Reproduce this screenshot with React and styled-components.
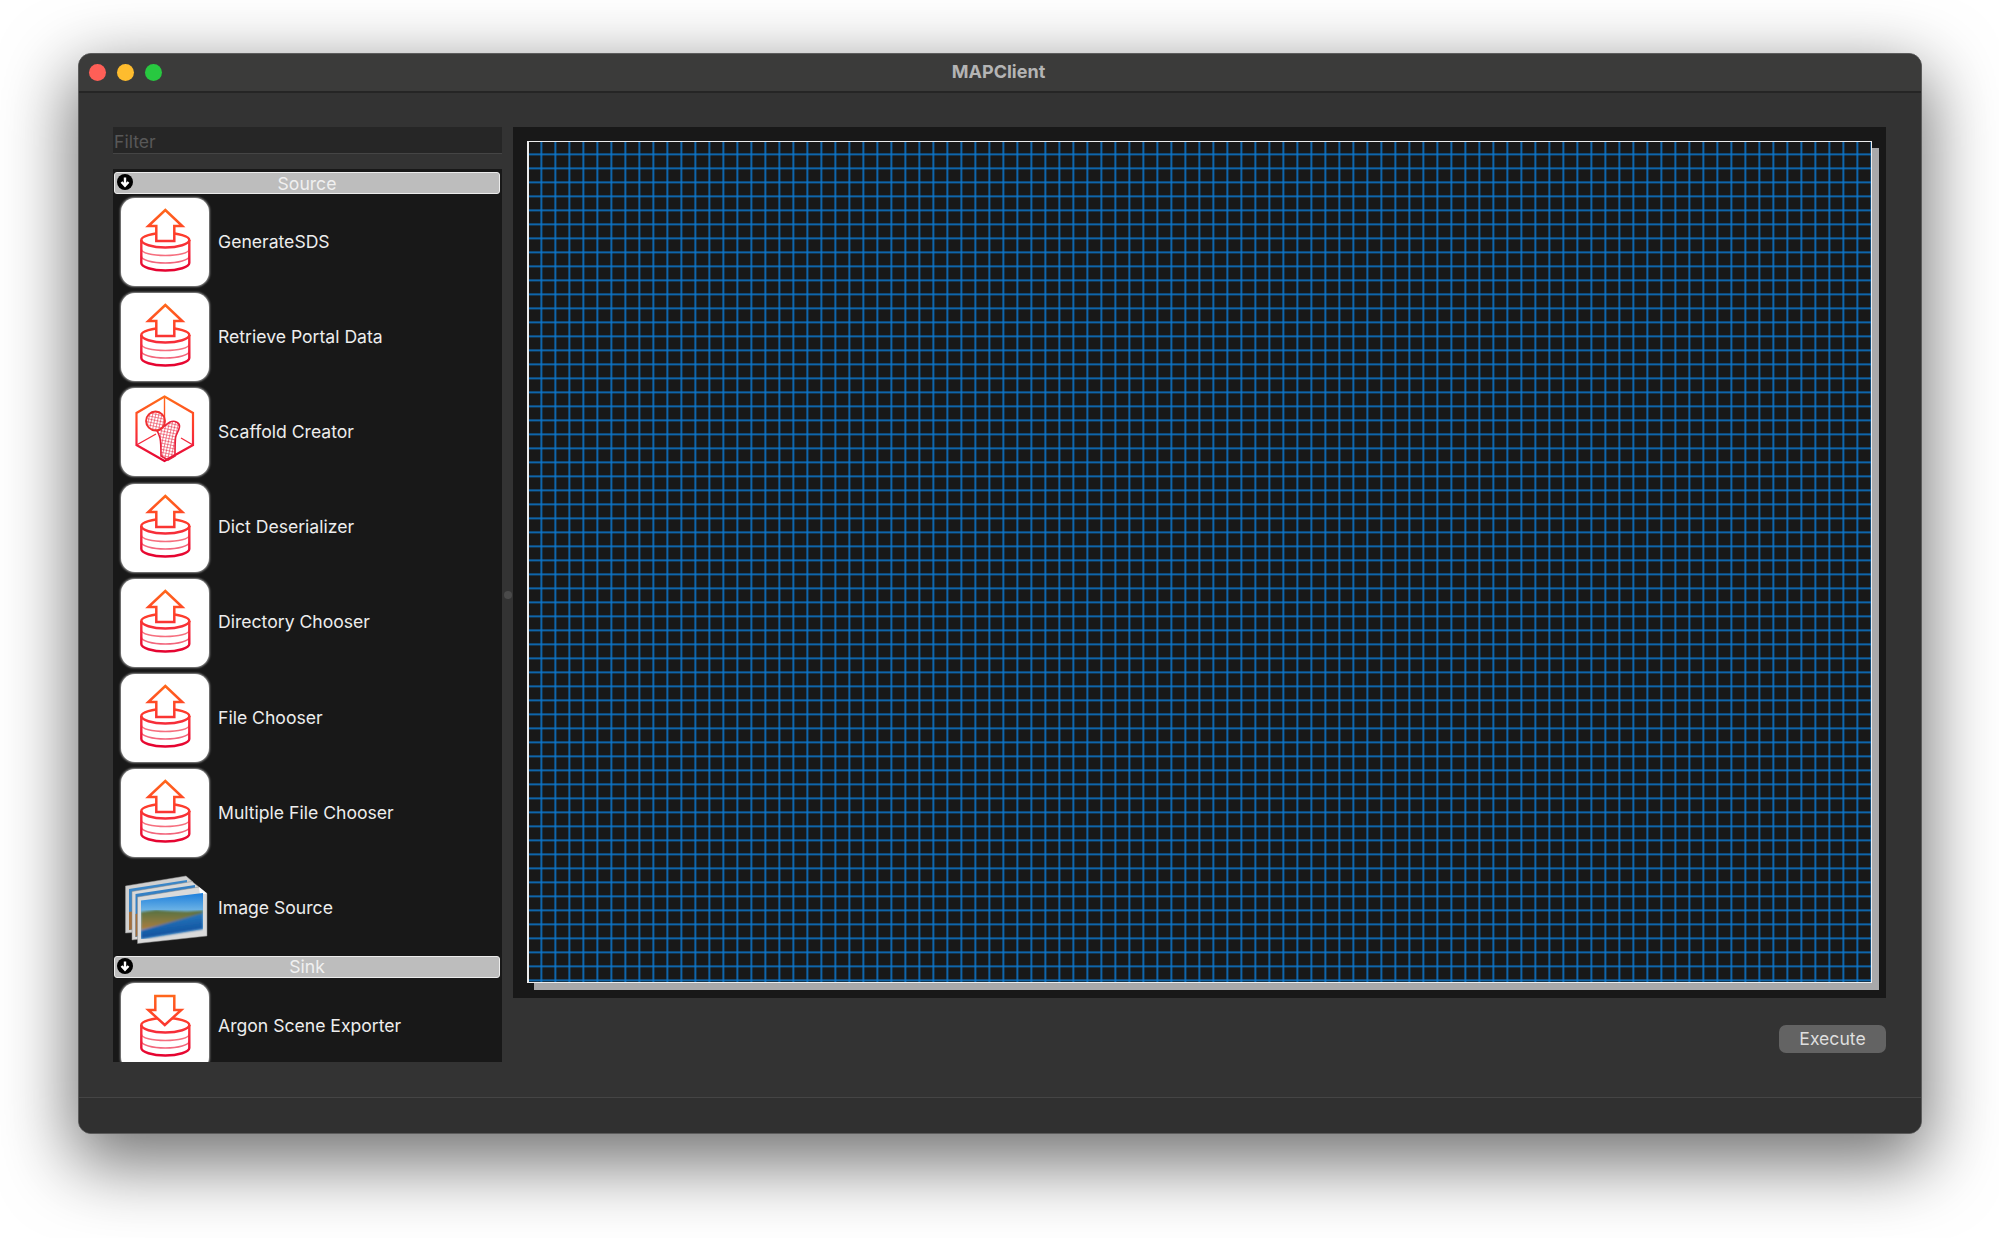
import styled, { createGlobalStyle } from 'styled-components'

const GlobalStyle = createGlobalStyle`
    html, body {
        margin: 0;
        height: 100%;
        background: #ffffff;
        overflow: hidden;
        font-family: Inter, "Liberation Sans", Arial, sans-serif;
    }
`

const sourceSteps = [
    { name: 'GenerateSDS', icon: 'upload' },
    { name: 'Retrieve Portal Data', icon: 'upload' },
    { name: 'Scaffold Creator', icon: 'scaffold' },
    { name: 'Dict Deserializer', icon: 'upload' },
    { name: 'Directory Chooser', icon: 'upload' },
    { name: 'File Chooser', icon: 'upload' },
    { name: 'Multiple File Chooser', icon: 'upload' },
    { name: 'Image Source', icon: 'image' },
]

const sinkSteps = [{ name: 'Argon Scene Exporter', icon: 'download' }]

const RedGradient = ({ id }) => (
    <defs>
        <linearGradient id={id} gradientUnits="userSpaceOnUse" x1="0" y1="10" x2="0" y2="74">
            <stop offset="0" stopColor="#ff6a1a" />
            <stop offset="0.4" stopColor="#ff3f2a" />
            <stop offset="0.65" stopColor="#f42a3c" />
            <stop offset="1" stopColor="#e4002f" />
        </linearGradient>
    </defs>
)

const Database = ({ stroke }) => (
    <g fill="none" stroke={stroke}>
        <ellipse cx="45" cy="42" rx="24" ry="7" strokeWidth="2.400" />
        <path d="M21 42V65C21 69 32 72.500 45 72.500S69 69 69 65V42" strokeWidth="2.400" fill="#fff" />
        <path d="M21 42C21 46 32 49.500 45 49.500S69 46 69 42" strokeWidth="2.400" />
        <path d="M21 51C21 55 32 57.500 45 57.500S69 55 69 51" strokeWidth="1.500" opacity=".65" />
        <path d="M21 58C21 62 32 65 45 65S69 62 69 58" strokeWidth="1.500" opacity=".65" />
    </g>
)

const TransferIcon = ({ id, down }) => {
    const stroke = `url(#${id})`
    return (
        <svg width="88" height="88" viewBox="0.7 0 88 88">
            <RedGradient id={id} />
            <Database stroke={stroke} />
            {down ? (
                <path
                    d="M35 13H54V27H61L44.500 42L28 27H35Z"
                    fill="#fff"
                    stroke={stroke}
                    strokeWidth="2.500"
                />
            ) : (
                <path
                    d="M45 12L62 28H54V43H36V28H28Z"
                    fill="#fff"
                    stroke={stroke}
                    strokeWidth="2.500"
                />
            )}
        </svg>
    )
}

const ScaffoldIcon = ({ id }) => {
    const stroke = `url(#${id})`
    return (
        <svg width="88" height="88" viewBox="0 0 88 88">
            <RedGradient id={id} />
            <defs>
                <pattern id={`${id}-mesh`} width="3" height="3" patternUnits="userSpaceOnUse" patternTransform="rotate(12)">
                    <path d="M0 0H3M0 0V3" stroke="#e8203a" strokeWidth="1.100" fill="none" />
                </pattern>
            </defs>
            <path d="M43.500 8.500L72 25V57L43.500 73L15.500 57V25Z" fill="none" stroke={stroke} strokeWidth="2.200" />
            <path d="M43.500 8.500V36M15.500 57L35 46M72 57L60 50" fill="none" stroke={stroke} strokeWidth="1.400" />
            <path
                d="M40 41C44 37 46 36 49 34C54 32 59 35 58.500 39C58 43 55 46 54.500 50C54 56 54 63 54 68L47 72L40 68C40 62 40 54 39 50C38 47 37 44 36 43Z"
                fill={`url(#${id}-mesh)`}
                stroke="#e8203a"
                strokeWidth="1.600"
            />
            <circle cx="34.500" cy="33" r="9.500" fill={`url(#${id}-mesh)`} stroke="#f03030" strokeWidth="1.800" />
        </svg>
    )
}

const ImageIcon = ({ id }) => (
    <svg width="88" height="88" viewBox="0 0 88 88">
        <defs>
            <linearGradient id={`${id}-sky`} x1="0" y1="0" x2="0" y2="1">
                <stop offset="0" stopColor="#1c7edc" />
                <stop offset="0.5" stopColor="#86c4e8" />
            </linearGradient>
            <linearGradient id={`${id}-water`} x1="0" y1="0" x2="0.3" y2="1">
                <stop offset="0" stopColor="#3186c8" />
                <stop offset="1" stopColor="#0c4c9a" />
            </linearGradient>
            <linearGradient id={`${id}-trees`} x1="0" y1="0" x2="0" y2="1">
                <stop offset="0" stopColor="#56703f" />
                <stop offset="0.6" stopColor="#8c7a40" />
                <stop offset="1" stopColor="#b07a3c" />
            </linearGradient>
            <filter id={`${id}-soft`} x="0" y="0" width="1" height="1">
                <feGaussianBlur stdDeviation="0.800" />
            </filter>
        </defs>
        <g transform="translate(0 8)">
            <path d="M4.500 14L65 4L72 10V56L4.500 61Z" fill="#d0d0d0" stroke="#999" strokeWidth=".5" />
            <path d="M8 17L66 8V48L8 58Z" fill="#3a86c8" />
            <path d="M8 40L20 38V56L8 58Z" fill="#a5703c" />
            <path d="M11 19.500L71 9.500L78 15V60L11 68Z" fill="#d8d8d8" stroke="#888" strokeWidth=".5" />
            <path d="M14.500 22L74 13V54L14.500 65Z" fill="#3580c4" />
            <path d="M14.500 42L20 41V62L14.500 65Z" fill="#a5703c" />
            <path d="M16.500 25L78 15L86 21.500V64L16.500 71.500Z" fill="#dadada" stroke="#888" strokeWidth=".5" />
            <path d="M78 15L86 21.500L79 22.500Z" fill="#fff" />
            <path d="M20 28.500L82 21V57L20 67Z" fill={`url(#${id}-sky)`} />
            <g filter={`url(#${id}-soft)`}>
                <path d="M20 40L35 38L50 39L66 39.500L82 38.500V42L45 52L20 58Z" fill={`url(#${id}-trees)`} />
                <path d="M20 58.500L45 51.500L82 41V57L20 67Z" fill={`url(#${id}-water)`} />
            </g>
        </g>
    </svg>
)

const StepIcon = ({ type, id }) => {
    if (type === 'scaffold') return <ScaffoldIcon id={id} />
    if (type === 'image') return <ImageIcon id={id} />
    return <TransferIcon id={id} down={type === 'download'} />
}

const DisclosureArrow = () => (
    <DisclosureSvg viewBox="0 0 16 16">
        <circle cx="8" cy="8" r="8" fill="#000" />
        <path d="M8 3.500V11.500M4.500 8L8 11.800L11.500 8" fill="none" stroke="#fff" strokeWidth="2.400" />
    </DisclosureSvg>
)

const StepSection = ({ title, steps }) => (
    <Section>
        <SectionHeader>
            <DisclosureArrow />
            {title}
        </SectionHeader>
        {steps.map((step, i) => (
            <StepRow key={step.name}>
                <IconTile $plain={step.icon === 'image'}>
                    <StepIcon type={step.icon} id={`${title}-${i}`} />
                </IconTile>
                <StepName>{step.name}</StepName>
            </StepRow>
        ))}
    </Section>
)

const App = () => {
    return (
        <>
            <GlobalStyle />
            <Page>
                <Window>
                    <TitleBar>
                        <Lights>
                            <Light $color="#ff5f57" />
                            <Light $color="#febc2e" />
                            <Light $color="#28c840" />
                        </Lights>
                        <WindowTitle>MAPClient</WindowTitle>
                    </TitleBar>
                    <Body>
                        <Sidebar>
                            <FilterInput placeholder="Filter" />
                            <StepList>
                                <StepSection title="Source" steps={sourceSteps} />
                                <StepSection title="Sink" steps={sinkSteps} />
                            </StepList>
                        </Sidebar>
                        <Splitter>
                            <SplitterDot />
                        </Splitter>
                        <Workspace>
                            <ScenePanel>
                                <Scene />
                            </ScenePanel>
                            <Actions>
                                <ExecuteButton>Execute</ExecuteButton>
                            </Actions>
                        </Workspace>
                    </Body>
                    <StatusBar />
                </Window>
            </Page>
        </>
    )
}

const Page = styled.main`
    padding: 53px 0 0 78px;
    height: 1238px;
    box-sizing: border-box;
`

const Window = styled.div`
    width: 1844px;
    height: 1081px;
    box-sizing: border-box;
    display: flex;
    flex-direction: column;
    background: #333333;
    border: 1px solid #5c5c5c;
    border-radius: 13px;
    box-shadow: 0 24px 70px 6px rgba(0, 0, 0, 0.55);
    overflow: hidden;
`

const TitleBar = styled.header`
    flex: none;
    height: 39px;
    box-sizing: border-box;
    padding-bottom: 2px;
    position: relative;
    display: flex;
    align-items: center;
    justify-content: center;
    background: #3b3b3a;
    border-bottom: 2px solid #252525;
`

const Lights = styled.div`
    position: absolute;
    left: 10px;
    top: 10px;
    display: flex;
    gap: 11px;
`

const Light = styled.span`
    width: 17px;
    height: 17px;
    border-radius: 50%;
    background: ${(props) => props.$color};
`

const WindowTitle = styled.h1`
    margin: 0 3px 0 0;
    font-size: 18px;
    font-weight: 700;
    color: #b4b4b4;
`

const Body = styled.div`
    flex: 1;
    min-height: 0;
    display: flex;
    padding: 34px 35px 0 34px;
`

const Sidebar = styled.aside`
    flex: none;
    width: 389px;
    display: flex;
    flex-direction: column;
    gap: 15px;
`

const FilterInput = styled.input`
    flex: none;
    height: 27px;
    box-sizing: border-box;
    padding: 3px 1px 0;
    background: #262626;
    border: none;
    border-bottom: 1.500px solid #454545;
    outline: none;
    color: #ddd;
    font: 17.600px Inter, "Liberation Sans", Arial, sans-serif;

    &::placeholder {
        color: #585858;
        opacity: 1;
    }
`

const StepList = styled.div`
    flex: none;
    height: 893px;
    box-sizing: border-box;
    padding: 3px 2px 0 1px;
    background: #181818;
    overflow: hidden;
`

const Section = styled.section`
    & + & {
        margin-top: 0.400px;

        > div:first-child {
            margin-bottom: 1px;
        }
    }
`

const SectionHeader = styled.div`
    position: relative;
    height: 22px;
    box-sizing: border-box;
    display: flex;
    align-items: center;
    justify-content: center;
    background: #bdbdbd;
    border: 1.500px solid #ececec;
    border-radius: 3px;
    color: #f0f0f0;
    font-size: 17.600px;
`

const DisclosureSvg = styled.svg`
    position: absolute;
    left: 2px;
    top: 1px;
    width: 16px;
    height: 16px;
`

const StepRow = styled.div`
    height: 95.200px;
    box-sizing: border-box;
    padding: 4px 0 3px 7px;
    display: flex;
    align-items: center;
    gap: 9px;
`

const IconTile = styled.div`
    flex: none;
    width: 88px;
    height: 88px;
    border-radius: 14px;
    background: ${(props) => (props.$plain ? 'transparent' : '#ffffff')};
    box-shadow: ${(props) => (props.$plain ? 'none' : '0 0 2px 0.5px #8d8d8d')};
`

const StepName = styled.span`
    padding-bottom: 2px;
    color: #ededed;
    font-size: 17.600px;
`

const Splitter = styled.div`
    flex: none;
    width: 11px;
    display: flex;
    align-items: center;
    justify-content: center;
    padding-bottom: 35px;
`

const SplitterDot = styled.span`
    width: 8px;
    height: 8px;
    border-radius: 50%;
    background: #4a4a4a;
`

const Workspace = styled.div`
    flex: 1;
    min-width: 0;
    display: flex;
    flex-direction: column;
    gap: 27px;
`

const ScenePanel = styled.div`
    flex: none;
    height: 871px;
    box-sizing: border-box;
    padding: 14px 14px 15px 14px;
    background: #181818;
`

const Scene = styled.div`
    height: 100%;
    box-sizing: border-box;
    background-color: #181818;
    background-image:
        linear-gradient(to right, transparent 0, #0c78cf 0.4px, #0c78cf 1.3px, transparent 1.8px),
        linear-gradient(to bottom, transparent 0, #0c78cf 0.4px, #0c78cf 1.3px, transparent 1.8px);
    background-size: 14px 14px;
    background-position: 11.500px 11.500px;
    border: 1.500px solid #ececec;
    border-left-width: 2px;
    box-shadow: 7px 7px 0 #a8a8aa;
`

const Actions = styled.div`
    display: flex;
    justify-content: flex-end;
`

const ExecuteButton = styled.button`
    width: 107px;
    height: 28px;
    padding: 0 0 1px;
    border: none;
    border-radius: 7px;
    background: #636363;
    color: #dedede;
    font: 17.600px Inter, "Liberation Sans", Arial, sans-serif;
`

const StatusBar = styled.footer`
    flex: none;
    height: 36px;
    background: #303030;
    border-top: 1.500px solid #454545;
    box-sizing: border-box;
`

export default App
